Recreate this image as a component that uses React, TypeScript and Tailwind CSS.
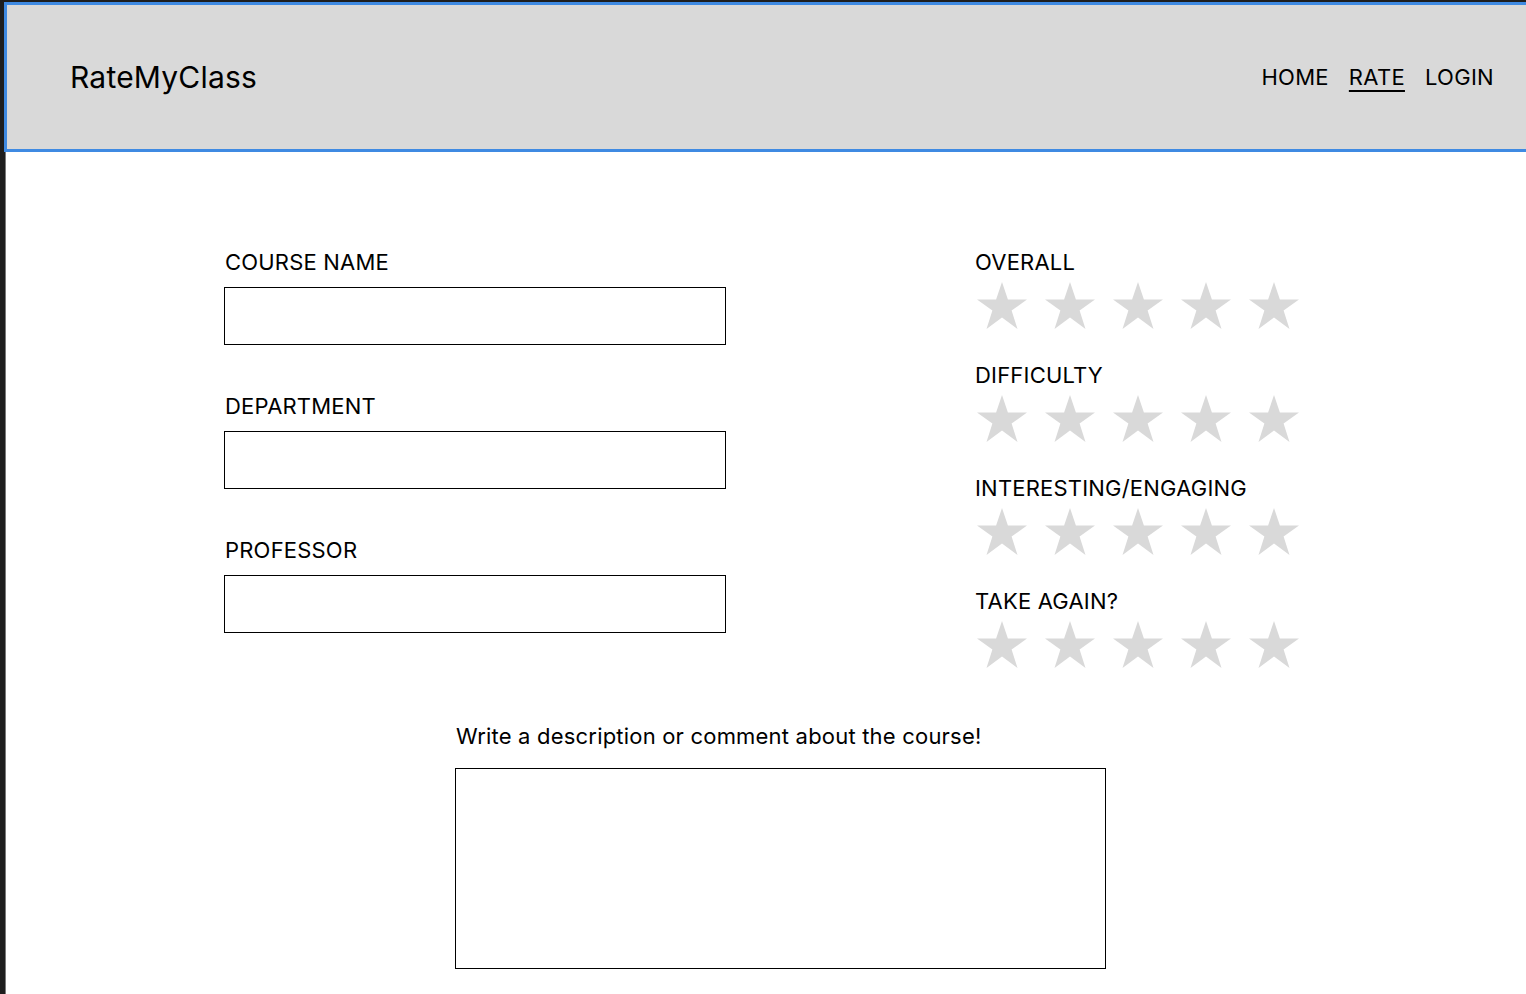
import React from 'react';

const Star = () => (
  <svg width="50" height="47" viewBox="0 0 50 47" className="shrink-0">
    <polygon
      fill="#d9d9d9"
      points="25,0 30.9,17.5 50,17.5 34.6,28.6 40.5,47 25,35.6 9.5,47 15.4,28.6 0,17.5 19.1,17.5"
    />
  </svg>
);

const StarRow = () => (
  <div className="flex gap-[18px] mt-[6px] ml-[2px]">
    {[0, 1, 2, 3, 4].map((i) => (
      <Star key={i} />
    ))}
  </div>
);

const fields = ['COURSE NAME', 'DEPARTMENT', 'PROFESSOR'];
const ratings = ['OVERALL', 'DIFFICULTY', 'INTERESTING/ENGAGING', 'TAKE AGAIN?'];

export default function App() {
  return (
    <div
      className="min-h-screen bg-[#1e1e1e] pt-[2px] pl-[4px] flex flex-col text-black"
      style={{ fontFamily: 'Inter, "Noto Sans", sans-serif' }}
    >
      <header className="h-[150px] bg-[#d9d9d9] border-[3px] border-r-0 border-[#3f8ae2] flex items-center justify-between pl-[63px] pr-[32px]">
        <h1 className="text-[30px] tracking-[0.2px] leading-none pb-[1px]">RateMyClass</h1>
        <nav className="flex gap-[20px] text-[22px] tracking-[0.3px] leading-none">
          <a>HOME</a>
          <a className="underline underline-offset-[5px] decoration-[1.5px]">RATE</a>
          <a>LOGIN</a>
        </nav>
      </header>

      <main className="flex-1 bg-white ml-[1px] border-l border-[#7a7a7a] pb-[25px]">
        <div className="flex pt-[96px] pl-[218px]">
          <div className="w-[502px] flex flex-col gap-[47px]">
            {fields.map((f) => (
              <div key={f} className="flex flex-col gap-[11px]">
                <label className="text-[22px] tracking-[0.2px] leading-[28px] pl-[1px]">{f}</label>
                <input className="h-[58px] w-full border border-black bg-white outline-none" />
              </div>
            ))}
          </div>

          <div className="ml-[249px] flex flex-col gap-[32px]">
            {ratings.map((r) => (
              <div key={r} className="flex flex-col">
                <span className="text-[22px] tracking-[0.2px] leading-[28px]">{r}</span>
                <StarRow />
              </div>
            ))}
          </div>
        </div>

        <div className="pl-[449px] mt-[54px] flex flex-col gap-[18px]">
          <label className="text-[22px] tracking-[0.2px] leading-[28px] pl-[1px]">
            Write a description or comment about the course!
          </label>
          <textarea className="w-[651px] h-[201px] border border-black bg-white resize-none outline-none" />
        </div>
      </main>
    </div>
  );
}
